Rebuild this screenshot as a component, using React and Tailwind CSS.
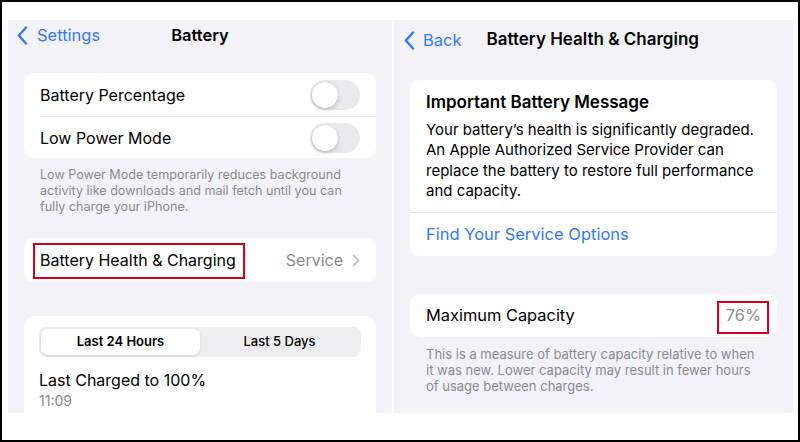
import React from "react";

const font = { fontFamily: "Inter, 'Noto Sans', sans-serif" };

function BackChevron() {
  return (
    <svg width="11" height="19" viewBox="0 0 11 19" fill="none">
      <path d="M9 1.5 L1.8 9.5 L9 17.5" stroke="#3478f6" strokeWidth="2.4" strokeLinecap="round" strokeLinejoin="round" />
    </svg>
  );
}

function Toggle() {
  return (
    <div className="w-[50px] h-[30px] rounded-full bg-[#e9e9eb] p-[2px] flex items-center">
      <div className="w-[26px] h-[26px] rounded-full bg-white shadow-[0_2px_4px_rgba(0,0,0,0.18),0_0_1px_rgba(0,0,0,0.2)]" />
    </div>
  );
}

function BatteryPanel() {
  return (
    <div className="w-[384px] h-[393px] shrink-0 bg-[#f2f2f7] overflow-hidden px-4">
      {/* Nav */}
      <div className="h-[28px] flex items-center relative -mx-4 pt-[2px]">
        <div className="flex items-center gap-[9px] pl-[9px] text-[#3478f6] text-[16.5px]">
          <BackChevron />
          <span>Settings</span>
        </div>
        <div className="absolute left-0 right-0 text-center text-[16.5px] font-semibold text-black pointer-events-none">Battery</div>
      </div>

      {/* Toggles */}
      <div className="mt-[25px] bg-white rounded-[10px]">
        <div className="h-[43px] flex items-center justify-between pl-4 pr-4">
          <span className="text-[16px] text-black">Battery Percentage</span>
          <Toggle />
        </div>
        <div className="h-[42px] flex items-center justify-between ml-4 pr-4 border-t border-[#e5e5ea]">
          <span className="text-[16px] text-black">Low Power Mode</span>
          <Toggle />
        </div>
      </div>
      <p className="pt-[9px] px-4 text-[12.6px] leading-4 text-[#8a8a8e]">
        Low Power Mode temporarily reduces background activity like downloads and mail fetch until you can fully charge your iPhone.
      </p>

      {/* Battery Health row */}
      <div className="mt-[23px] h-[44px] bg-white rounded-[10px] flex items-center justify-between px-4 relative">
        <span className="text-[16px] text-black">Battery Health &amp; Charging</span>
        <div className="flex items-center gap-[9px] text-[16px] text-[#8a8a8e]">
          <span>Service</span>
          <svg width="8" height="13" viewBox="0 0 8 13" fill="none">
            <path d="M1.5 1.5 L6.5 6.5 L1.5 11.5" stroke="#c4c4c7" strokeWidth="1.8" strokeLinecap="round" strokeLinejoin="round" />
          </svg>
        </div>
        <div className="absolute left-[9px] top-[5px] w-[212px] h-[36px] border-2 border-[#d6001c]" />
      </div>

      {/* Usage card */}
      <div className="mt-[34px] bg-white rounded-[10px] px-[15px] pt-[11px] pb-4">
        <div className="h-[30px] rounded-[8px] bg-[#eeeef0] p-[2px] flex text-[13px] font-semibold text-black">
          <div className="flex-1 rounded-[7px] bg-white shadow-[0_1px_3px_rgba(0,0,0,0.15)] flex items-center justify-center">Last 24 Hours</div>
          <div className="flex-1 flex items-center justify-center font-medium">Last 5 Days</div>
        </div>
        <div className="mt-[12px] text-[16px] leading-[22px] text-black">Last Charged to 100%</div>
        <div className="text-[14px] leading-[20px] text-[#8a8a8e]">11:09</div>
      </div>
    </div>
  );
}

function HealthPanel() {
  return (
    <div className="w-[399px] h-[393px] shrink-0 bg-[#f2f2f7] overflow-hidden px-4">
      {/* Nav */}
      <div className="h-10 flex items-center -mx-4">
        <div className="flex items-center gap-[8px] pl-[10px] text-[#3478f6] text-[16.5px]">
          <BackChevron />
          <span>Back</span>
        </div>
        <div className="ml-[25px] text-[17px] font-semibold text-black">Battery Health &amp; Charging</div>
      </div>

      {/* Message card */}
      <div className="mt-5 bg-white rounded-[10px]">
        <div className="px-4 pt-[11px] pb-[11px] border-b border-[#e5e5ea]">
          <div className="text-[17px] leading-[22px] font-semibold text-black">Important Battery Message</div>
          <p className="mt-[7px] text-[15px] leading-[20.3px] text-black">
            Your battery’s health is significantly degraded. An Apple Authorized Service Provider can replace the battery to restore full performance and capacity.
          </p>
        </div>
        <div className="h-[43px] flex items-center px-4 text-[16.5px] text-[#3478f6]">Find Your Service Options</div>
      </div>

      {/* Max capacity */}
      <div className="mt-[38px] h-[43px] bg-white rounded-[10px] flex items-center justify-between px-4 relative">
        <span className="text-[16.4px] text-black">Maximum Capacity</span>
        <span className="text-[16.4px] text-[#8a8a8e]">76%</span>
        <div className="absolute left-[307px] top-[7px] w-[52px] h-[33px] border-2 border-[#d6001c]" />
      </div>
      <p className="pt-[9px] px-4 text-[13px] leading-4 text-[#8a8a8e]">
        This is a measure of battery capacity relative to when it was new. Lower capacity may result in fewer hours of usage between charges.
      </p>
    </div>
  );
}

export default function App() {
  return (
    <div className="w-[800px] h-[442px] bg-white border-2 border-black pt-[18px] pl-[6px] flex gap-[2px]" style={font}>
      <BatteryPanel />
      <HealthPanel />
    </div>
  );
}
